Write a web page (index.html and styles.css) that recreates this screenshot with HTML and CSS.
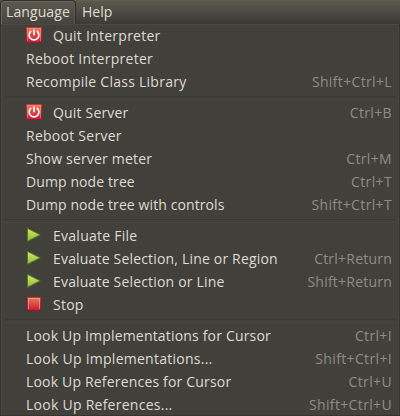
FILE: index.html
```
<!DOCTYPE html>
<html lang="en">
<head>
<meta charset="utf-8">
<title>Language menu</title>
<link rel="stylesheet" href="styles.css">
</head>
<body>
<svg class="defs" width="0" height="0" aria-hidden="true">
  <defs>
    <linearGradient id="red" x1="0" y1="0" x2="0" y2="1"><stop offset="0" stop-color="#ea7a60"/><stop offset="1" stop-color="#c9192f"/></linearGradient>
    <linearGradient id="edge" x1="0" y1="0" x2="0" y2="1"><stop offset="0" stop-color="#d4302c"/><stop offset="1" stop-color="#981535"/></linearGradient>
    <linearGradient id="green" x1="0" y1="0" x2="0" y2="1"><stop offset="0" stop-color="#d3e86c"/><stop offset="1" stop-color="#94b83a"/></linearGradient>
    <symbol id="power" viewBox="0 0 16 16">
      <rect x=".5" y=".5" width="15" height="15" fill="url(#red)" stroke="url(#edge)"/>
      <path d="M1.5 14V1.5h13V14" fill="none" stroke="#ef9b87" stroke-opacity=".55"/>
      <path d="M5.2 4a4.9 4.9 0 1 0 5.6 0M8 2.6v5.6" fill="none" stroke="#fff" stroke-width="1.6"/>
    </symbol>
    <symbol id="play" viewBox="0 0 16 16">
      <path d="M1.5 1.4v12.8L14.2 7.8z" fill="url(#green)" stroke="#4f8018"/>
    </symbol>
    <symbol id="stop" viewBox="0 0 16 16">
      <rect x="1.5" y="1.5" width="13" height="13" fill="url(#red)" stroke="url(#edge)"/>
      <path d="M2.5 13V2.5h11V13" fill="none" stroke="#f2a08e" stroke-opacity=".7"/>
    </symbol>
  </defs>
</svg>
<nav class="menubar"><span class="tab active">Language</span><span class="tab">Help</span></nav>
<main class="menu">
  <div class="item"><svg class="icon"><use href="#power"/></svg><span class="label wide">Quit Interpreter</span></div>
  <div class="item"><span class="label wide">Reboot Interpreter</span></div>
  <div class="item"><span class="label wide">Recompile Class Library</span><span class="key">Shift+Ctrl+L</span></div>
  <div class="separator"></div>
  <div class="item"><svg class="icon"><use href="#power"/></svg><span class="label">Quit Server</span><span class="key">Ctrl+B</span></div>
  <div class="item"><span class="label wide">Reboot Server</span></div>
  <div class="item"><span class="label">Show server meter</span><span class="key">Ctrl+M</span></div>
  <div class="item"><span class="label tight">Dump node tree</span><span class="key">Ctrl+T</span></div>
  <div class="item"><span class="label tight">Dump node tree with controls</span><span class="key">Shift+Ctrl+T</span></div>
  <div class="separator"></div>
  <div class="item"><svg class="icon"><use href="#play"/></svg><span class="label wide">Evaluate File</span></div>
  <div class="item"><svg class="icon"><use href="#play"/></svg><span class="label">Evaluate Selection, Line or Region</span><span class="key narrow">Ctrl+Return</span></div>
  <div class="item"><svg class="icon"><use href="#play"/></svg><span class="label">Evaluate Selection or Line</span><span class="key narrow">Shift+Return</span></div>
  <div class="item"><svg class="icon"><use href="#stop"/></svg><span class="label wide">Stop</span></div>
  <div class="separator"></div>
  <div class="item"><span class="label">Look Up Implementations for Cursor</span><span class="key">Ctrl+I</span></div>
  <div class="item"><span class="label wide">Look Up Implementations...</span><span class="key">Shift+Ctrl+I</span></div>
  <div class="item"><span class="label">Look Up References for Cursor</span><span class="key">Ctrl+U</span></div>
  <div class="item"><span class="label wide">Look Up References...</span><span class="key">Shift+Ctrl+U</span></div>
</main>
</body>
</html>
```
FILE: styles.css
```
* { box-sizing: border-box; }
body {
  margin: 0;
  width: 400px;
  height: 416px;
  overflow: hidden;
  display: flex;
  flex-direction: column;
  background: #3c3b37;
  color: #dfdbd2;
  font: 14px/23px "Open Sans", "Noto Sans", sans-serif;
}
.defs { position: absolute; }
.menubar {
  display: flex;
  height: 24px;
  flex: none;
  background: linear-gradient(#69654f 0, #5b584d 1px, #3c3b37 23px);
}
.tab {
  height: 24px;
  padding: 0 6px;
  line-height: 24px;
  white-space: nowrap;
}
.tab.active {
  width: 76px;
  padding-left: 5px;
  letter-spacing: .1px;
  border: 1px solid #302f2b;
  border-bottom: 0;
  border-radius: 4px 4px 0 0;
  background: linear-gradient(#5c594f, #45433d);
  box-shadow: inset 1px 1px #6a675d, inset -1px 0 #5b584f;
  line-height: 22px;
}
.menu {
  height: 392px;
  border: 1px solid #34332f;
  border-top: 0;
  background: #42403b;
  box-shadow: inset 1px 1px #4b4943, inset -1px 0 #464540;
}
.item {
  display: flex;
  align-items: center;
  height: 23px;
  padding: 0 7px 0 25px;
  white-space: nowrap;
}
.icon {
  width: 16px;
  height: 16px;
  margin-right: 11px;
  flex: none;
  position: relative;
  top: -1px;
}
.label { letter-spacing: .18px; }
.label.wide { letter-spacing: .26px; }
.label.tight { letter-spacing: .1px; }
.key {
  margin-left: auto;
  color: #8f8c85;
  letter-spacing: .35px;
}
.key.narrow { letter-spacing: .22px; }
.separator {
  height: 8px;
  padding: 3px 4px 0;
}
.separator::before {
  content: "";
  display: block;
  height: 2px;
  border-top: 1px solid #3b3935;
  border-bottom: 1px solid #484640;
}
```
